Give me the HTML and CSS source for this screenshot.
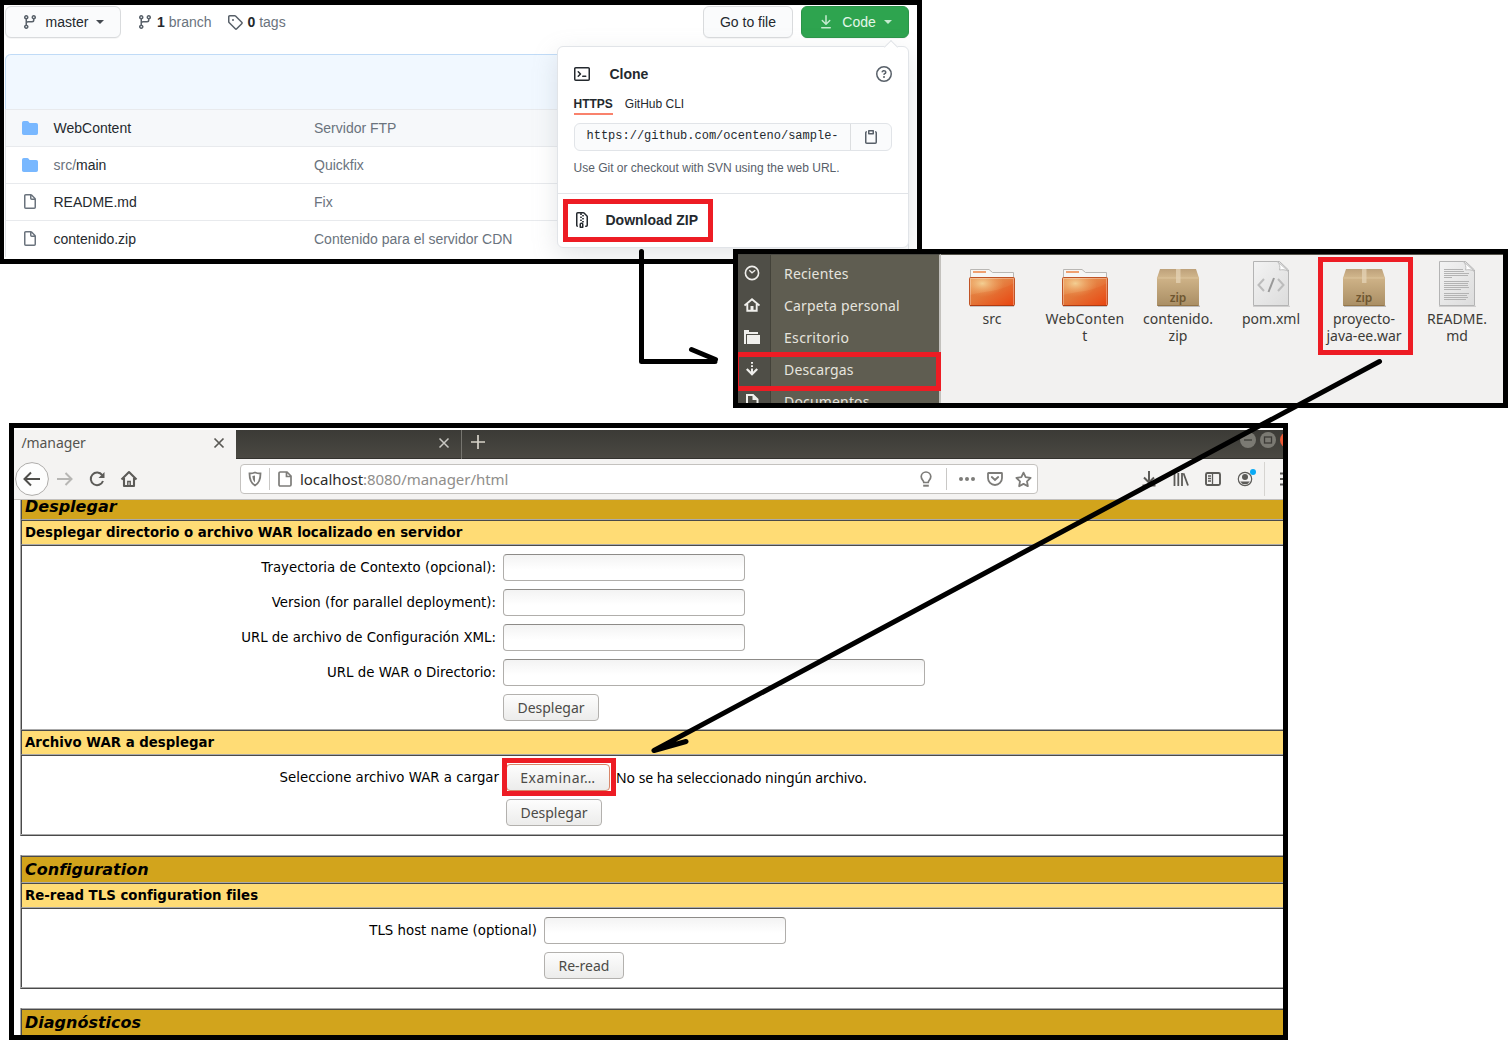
FILE: index.html
```html
<!DOCTYPE html>
<html lang="es">
<head>
<meta charset="utf-8">
<title>Despliegue del proyecto</title>
<link rel="stylesheet" href="styles.css">
</head>
<body>
<svg class="defs" width="0" height="0" aria-hidden="true">
  <defs>
    <symbol id="branch" viewBox="0 0 16 16"><path fill-rule="evenodd" d="M11.75 2.5a.75.75 0 100 1.5.75.75 0 000-1.5zm-2.25.75a2.25 2.25 0 113 2.122V6A2.5 2.5 0 0110 8.5H6a1 1 0 00-1 1v1.128a2.251 2.251 0 11-1.5 0V5.372a2.25 2.25 0 111.5 0v1.836A2.492 2.492 0 016 7h4a1 1 0 001-1v-.628A2.25 2.25 0 019.5 3.25zM4.25 12a.75.75 0 100 1.5.75.75 0 000-1.5zM3.5 3.25a.75.75 0 111.5 0 .75.75 0 01-1.5 0z"/></symbol>
    <symbol id="dir" viewBox="0 0 16 16"><path d="M1.75 1A1.75 1.75 0 000 2.75v10.5C0 14.216.784 15 1.75 15h12.5A1.75 1.75 0 0016 13.25v-8.5A1.75 1.75 0 0014.25 3h-6.5a.25.25 0 01-.2-.1l-.9-1.2c-.33-.44-.85-.7-1.4-.7h-3.5z"/></symbol>
    <symbol id="file" viewBox="0 0 16 16"><path fill-rule="evenodd" d="M3.75 1.5a.25.25 0 00-.25.25v11.5c0 .138.112.25.25.25h8.5a.25.25 0 00.25-.25V6H9.75A1.75 1.75 0 018 4.25V1.5H3.75zm5.75.56v2.19c0 .138.112.25.25.25h2.19L9.5 2.06zM2 1.75C2 .784 2.784 0 3.75 0h5.086c.464 0 .909.184 1.237.513l3.414 3.414c.329.328.513.773.513 1.237v8.086A1.75 1.75 0 0112.25 15h-8.5A1.75 1.75 0 012 13.25V1.75z"/></symbol>
    <linearGradient id="orange" x1="0" y1="0" x2="1" y2="1"><stop offset="0" stop-color="#e99a58"/><stop offset=".45" stop-color="#e58243"/><stop offset="1" stop-color="#ec4310"/></linearGradient>
    <radialGradient id="glow" cx=".28" cy=".2" r=".5"><stop offset="0" stop-color="#f3cf93"/><stop offset="1" stop-color="#f0a060" stop-opacity="0"/></radialGradient>
    <linearGradient id="box" x1="0" y1="0" x2="0" y2="1"><stop offset="0" stop-color="#cfb388"/><stop offset="1" stop-color="#a98e64"/></linearGradient>
    <linearGradient id="lid" x1="0" y1="0" x2="0" y2="1"><stop offset="0" stop-color="#bda17a"/><stop offset="1" stop-color="#d2b78d"/></linearGradient>
    <linearGradient id="paper" x1="0" y1="0" x2="1" y2="1"><stop offset="0" stop-color="#f3f3f3"/><stop offset="1" stop-color="#dcdcdc"/></linearGradient>
    <symbol id="folder" viewBox="0 0 48 48">
      <path d="M2.500 19V9.500h18.500l3.500 3H45.500V19z" fill="#f6f6f5" stroke="#b9b7b4"/>
      <rect x="5" y="11" width="13" height="2" fill="#efa070"/>
      <path d="M2 46.500h44" stroke="#999" stroke-opacity=".5"/>
      <rect x="1.500" y="17.500" width="45" height="28" rx="1" fill="url(#orange)" stroke="#c05325"/>
      <rect x="2" y="18" width="44" height="27" fill="url(#glow)"/>
      <path d="M2 35C16 31 32 32 46 23V45H2z" fill="#e0500e" fill-opacity=".18"/>
      <path d="M2.500 45V18.500h43V45" fill="none" stroke="#fff" stroke-opacity=".3"/>
      <path d="M2 45.500h44" stroke="#b03a10"/>
    </symbol>
    <symbol id="package" viewBox="0 0 48 48">
      <path d="M4 46.300h42" stroke="#888" stroke-opacity=".5" stroke-width="1.500"/>
      <path d="M6 9H42l3 9H3z" fill="url(#lid)"/>
      <rect x="3" y="17.500" width="42" height="28.500" rx="1" fill="url(#box)"/>
      <path d="M3.500 18h41" stroke="#dcc49c"/>
      <path d="M3.500 45.500h41" stroke="#937549"/>
      <rect x="22" y="9" width="4.500" height="14" fill="#e4d3b5" fill-opacity=".75"/>
      <text x="24" y="42" text-anchor="middle" class="zip">zip</text>
    </symbol>
    <symbol id="sheet" viewBox="0 0 48 48">
      <path d="M6 46.300h37" stroke="#888" stroke-opacity=".4"/>
      <path d="M6.500 1.500h26L41.500 10V45.500h-35z" fill="url(#paper)" stroke="#b4b4b4"/>
      <path d="M30.500 1.500L41.500 11.500c-3-2-6-2-9-1.500 1-3 0-6-2-8.500z" fill="#fff" stroke="#bdbdbd"/>
    </symbol>
  </defs>
</svg>

<main class="canvas">

  <section class="frame repo">
    <div class="repo-bar">
      <button class="gh-btn branch-btn"><svg width="16" height="16"><use href="#branch"/></svg><span>master</span><i class="caret"></i></button>
      <span class="count branches"><svg width="16" height="16"><use href="#branch"/></svg><span><b>1</b> branch</span></span>
      <span class="count tags"><svg width="16" height="16" viewBox="0 0 16 16"><path fill-rule="evenodd" d="M2.500 7.775V2.750a.25.25 0 01.25-.25h5.025a.25.25 0 01.177.073l6.250 6.250a.25.25 0 010 .354l-5.025 5.025a.25.25 0 01-.354 0l-6.250-6.250a.25.25 0 01-.073-.177zm-1.500 0V2.750C1 1.784 1.784 1 2.750 1h5.025c.464 0 .91.184 1.238.513l6.250 6.250a1.750 1.750 0 010 2.474l-5.026 5.026a1.750 1.750 0 01-2.474 0l-6.250-6.250A1.750 1.750 0 011 7.775zM6 5a1 1 0 100 2 1 1 0 000-2z"/></svg><span><b>0</b> tags</span></span>
      <button class="gh-btn goto">Go to file</button>
      <button class="gh-btn code"><svg width="16" height="16" viewBox="0 0 16 16"><path d="M7.470 10.780a.75.75 0 001.060 0l3.750-3.750a.75.75 0 00-1.060-1.060L8.750 8.440V1.750a.75.75 0 00-1.500 0v6.690L4.780 5.970a.75.75 0 00-1.060 1.060l3.750 3.750zM3.750 13a.75.75 0 000 1.500h8.500a.75.75 0 000-1.500h-8.500z"/></svg><span>Code</span><i class="caret"></i></button>
    </div>
    <div class="files">
      <div class="latest"></div>
      <div class="file-row hover"><svg class="dir" width="16" height="16"><use href="#dir"/></svg><span class="name">WebContent</span><span class="msg">Servidor FTP</span></div>
      <div class="file-row"><svg class="dir" width="16" height="16"><use href="#dir"/></svg><span class="name"><em>src/</em>main</span><span class="msg">Quickfix</span></div>
      <div class="file-row"><svg width="16" height="16"><use href="#file"/></svg><span class="name">README.md</span><span class="msg">Fix</span></div>
      <div class="file-row"><svg width="16" height="16"><use href="#file"/></svg><span class="name">contenido.zip</span><span class="msg">Contenido para el servidor CDN</span></div>
    </div>
    <div class="popup">
      <div class="clone">
        <div class="clone-head"><svg width="16" height="16" viewBox="0 0 16 16"><path fill-rule="evenodd" d="M0 2.750C0 1.784.784 1 1.750 1h12.500c.966 0 1.750.784 1.750 1.750v10.500A1.750 1.750 0 0114.250 15H1.750A1.750 1.750 0 010 13.250V2.750zm1.750-.25a.25.25 0 00-.25.25v10.500c0 .138.112.25.25.25h12.500a.25.25 0 00.25-.25V2.750a.25.25 0 00-.25-.25H1.750zM7.250 8a.75.75 0 01-.22.53l-2.250 2.250a.75.75 0 11-1.060-1.060L5.440 8 3.720 6.280a.75.75 0 111.060-1.060l2.250 2.250c.141.14.22.331.22.53zm1.500 1.500a.75.75 0 000 1.500h3a.75.75 0 000-1.500h-3z"/></svg><strong>Clone</strong><svg class="help" width="16" height="16" viewBox="0 0 16 16"><path fill-rule="evenodd" d="M8 1.500a6.500 6.500 0 100 13 6.500 6.500 0 000-13zM0 8a8 8 0 1116 0A8 8 0 010 8zm9 3a1 1 0 11-2 0 1 1 0 012 0zM6.920 6.085c.081-.16.19-.299.34-.398.145-.097.371-.187.74-.187.28 0 .553.087.738.225A.613.613 0 019 6.250c0 .177-.04.264-.077.318a.956.956 0 01-.277.245c-.076.051-.158.1-.258.161l-.007.004a7.728 7.728 0 00-.313.195 2.416 2.416 0 00-.692.661.75.75 0 001.248.832.956.956 0 01.276-.245 6.300 6.300 0 01.26-.16l.006-.004c.093-.057.204-.123.313-.195.222-.149.487-.355.692-.662.214-.32.329-.702.329-1.150 0-.76-.36-1.348-.863-1.725A2.760 2.760 0 008 4c-.631 0-1.155.16-1.572.438-.413.276-.68.638-.849.977a.75.75 0 101.342.67z"/></svg></div>
        <div class="proto"><span class="on">HTTPS</span><span>GitHub CLI</span></div>
        <div class="url-group"><span class="clone-url">https://github.com/ocenteno/sample-</span><span class="copy"><svg width="16" height="16" viewBox="0 0 16 16"><path fill-rule="evenodd" d="M5.750 1a.75.75 0 00-.75.75v3c0 .414.336.75.75.75h4.500a.75.75 0 00.75-.75v-3a.75.75 0 00-.75-.75h-4.500zm.75 3V2.500h3V4h-3zm-2.874-.467a.75.75 0 00-.752-1.298A1.750 1.750 0 002 3.750v9.500c0 .966.784 1.750 1.750 1.750h8.500A1.750 1.750 0 0014 13.250v-9.500a1.750 1.750 0 00-.874-1.515.75.75 0 10-.752 1.298.25.25 0 01.126.217v9.500a.25.25 0 01-.25.25h-8.500a.25.25 0 01-.25-.25v-9.500a.25.25 0 01.126-.217z"/></svg></span></div>
        <p class="hint">Use Git or checkout with SVN using the web URL.</p>
      </div>
      <div class="download"><svg width="16" height="16" viewBox="0 0 16 16"><path fill-rule="evenodd" d="M3.500 1.750a.25.25 0 01.25-.25h3a.75.75 0 000 1.500h.5a.75.75 0 000-1.500h2.086a.25.25 0 01.177.073l2.914 2.914a.25.25 0 01.073.177v8.586a.25.25 0 01-.25.25h-.5a.75.75 0 000 1.500h.5A1.750 1.750 0 0014 13.250V4.664c0-.464-.184-.909-.513-1.237L10.573.513A1.750 1.750 0 009.336 0H3.750A1.750 1.750 0 002 1.750v11.500c0 .649.353 1.214.874 1.515a.75.75 0 10.752-1.298.25.25 0 01-.126-.217V1.750zM8.750 3a.75.75 0 000 1.500h.5a.75.75 0 000-1.500h-.5zM6 5.250a.75.75 0 01.75-.75h.5a.75.75 0 010 1.500h-.5A.75.75 0 016 5.250zm2 1.500A.75.75 0 018.750 6h.5a.75.75 0 010 1.500h-.5A.75.75 0 018 6.750zm-1.250.75a.75.75 0 000 1.500h.5a.75.75 0 000-1.500h-.5zM8 9.750A.75.75 0 018.750 9h.5a.75.75 0 010 1.500h-.5A.75.75 0 018 9.750zm-.75.75a1.750 1.750 0 00-1.750 1.750v3c0 .414.336.75.75.75h2.500a.75.75 0 00.75-.75v-3a1.750 1.750 0 00-1.750-1.750h-.5zM7 12.250a.25.25 0 01.25-.25h.5a.25.25 0 01.25.25v2.250H7v-2.250z"/></svg><strong>Download ZIP</strong></div>
    </div>
  </section>

  <section class="frame nautilus">
    <nav class="places">
      <div class="place"><span class="pic"><svg width="16" height="16" viewBox="0 0 16 16"><circle cx="8" cy="8" r="6.600" fill="none" stroke="#f0efec" stroke-width="1.600"/><path d="M5.300 5.300L8 7.800l3.200-2.600" fill="none" stroke="#f0efec" stroke-width="1.300"/></svg></span><span>Recientes</span></div>
      <div class="place"><span class="pic"><svg width="16" height="16" viewBox="0 0 16 16"><path d="M.5 8.500L8 2.200l7.500 6.300M3.300 7v6.700h9.400V7" fill="none" stroke="#f0efec" stroke-width="1.900"/><path d="M6.500 14V9h3v5z" fill="#f0efec"/></svg></span><span>Carpeta personal</span></div>
      <div class="place"><span class="pic"><svg width="16" height="16" viewBox="0 0 16 16"><path d="M0 1h5v2h9v2H2v10H0z" fill="#f0efec"/><path d="M3 6h13v9H3z" fill="#f0efec"/></svg></span><span class="tight">Escritorio</span></div>
      <div class="place"><span class="pic"><svg width="16" height="16" viewBox="0 0 16 16"><path d="M8 1v1.800M8 4.200V6M8 7.400V13" stroke="#f0efec" stroke-width="2"/><path d="M2.800 8L8 13.300 13.200 8" fill="none" stroke="#f0efec" stroke-width="2.200"/></svg></span><span>Descargas</span></div>
      <div class="place"><span class="pic"><svg width="16" height="16" viewBox="0 0 16 16"><path d="M3 15V2h6l4.500 4.500V15z" fill="none" stroke="#f0efec" stroke-width="2"/><path d="M8.500 2v5h5z" fill="#f0efec"/></svg></span><span>Documentos</span></div>
    </nav>
    <div class="icons">
      <div class="item"><svg width="48" height="48"><use href="#folder"/></svg><span>src</span></div>
      <div class="item"><svg width="48" height="48"><use href="#folder"/></svg><span class="spread">WebConten<br>t</span></div>
      <div class="item"><svg width="48" height="48"><use href="#package"/></svg><span>contenido.<br>zip</span></div>
      <div class="item"><svg width="48" height="48" viewBox="0 0 48 48"><use href="#sheet"/><path d="M17 19l-5.500 6 5.500 6M31 19l5.500 6-5.500 6" fill="none" stroke="#bcbcbc" stroke-width="2"/><path d="M27 18l-5.500 14" stroke="#999" stroke-width="2"/></svg><span>pom.xml</span></div>
      <div class="item"><svg width="48" height="48"><use href="#package"/></svg><span>proyecto-<br>java-ee.war</span></div>
      <div class="item"><svg width="48" height="48" viewBox="0 0 48 48"><use href="#sheet"/><path d="M11 9.500h19M11 11.500h20M11 13.500h25M11 15.500h24M11 17.500h8M11 21.500h25M11 23.500h24M11 25.500h24M11 27.500h25M11 29.500h17M11 33.500h25M11 35.500h23M11 37.500h24M11 39.500h22" stroke="#b3b3b3"/></svg><span>README.<br>md</span></div>
    </div>
  </section>

  <section class="frame firefox">
    <div class="tabs">
      <div class="tab active"><span>/manager</span><svg width="12" height="12" viewBox="0 0 12 12"><path d="M1.500 1.500l9 9M10.500 1.500l-9 9" stroke="#5a5955" stroke-width="1.700"/></svg></div>
      <div class="tab dark"><svg width="12" height="12" viewBox="0 0 12 12"><path d="M1.500 1.500l9 9M10.500 1.500l-9 9" stroke="#c9c8c3" stroke-width="1.500"/></svg></div>
      <svg class="plus" width="16" height="16" viewBox="0 0 16 16"><path d="M8 1v14M1 8h14" stroke="#d6d2c8" stroke-width="1.700"/></svg>
      <svg class="winbtns" width="44" height="20" viewBox="-4 0 44 20"><circle cx="5" cy="10" r="8" fill="#7b7a73"/><path d="M1 10h8" stroke="#3c3b37" stroke-width="1.300"/><circle cx="25" cy="10" r="8" fill="#7b7a73"/><rect x="21.500" y="7" width="7" height="6" fill="none" stroke="#3c3b37" stroke-width="1.300"/><circle cx="45" cy="10" r="8" fill="#ee5a35"/></svg>
    </div>
    <div class="toolbar">
      <span class="tb back"><svg width="34" height="34" viewBox="0 0 34 34"><circle cx="17" cy="17" r="16.400" fill="#fdfdfd" stroke="#aeacaa"/><path d="M25 17H10M16 10.500L9.500 17l6.500 6.500" fill="none" stroke="#4f4e4b" stroke-width="2"/></svg></span>
      <span class="tb"><svg width="18" height="18" viewBox="0 0 18 18"><path d="M1 9h14M9.500 3l6 6-6 6" fill="none" stroke="#b7b6b4" stroke-width="2"/></svg></span>
      <span class="tb"><svg width="18" height="18" viewBox="0 0 18 18"><path d="M14.200 5.200A6.300 6.300 0 1 0 15 11" fill="none" stroke="#5c5b58" stroke-width="2"/><path d="M16.500 2v6H10.500z" fill="#5c5b58"/></svg></span>
      <span class="tb"><svg width="18" height="18" viewBox="0 0 18 18"><path d="M1.500 9.500L9 2l7.500 7.500M4 8v8h10V8" fill="none" stroke="#5c5b58" stroke-width="2.100" stroke-linejoin="round"/><path d="M7.800 16v-4.500h2.400V16" fill="none" stroke="#5c5b58" stroke-width="1.400"/></svg></span>
      <div class="urlbar">
        <span class="ub"><svg width="16" height="16" viewBox="0 0 16 16"><path d="M8 1.500c2 .9 4 1 5.500 1C13.500 8 12.500 12 8 14.500 3.500 12 2.500 8 2.500 2.500 4 2.500 6 2.400 8 1.500z" fill="none" stroke="#7d7c79" stroke-width="1.800"/><path d="M8 4.500v7C6 9.800 5.500 7.500 5.400 5z" fill="#7d7c79"/></svg></span>
        <i class="vr"></i>
        <span class="ub doc"><svg width="16" height="16" viewBox="0 0 16 16"><path d="M2 2.200C2 1.500 2.500 1 3.200 1H10l4 4v8.800c0 .7-.5 1.200-1.200 1.200H3.200C2.500 15 2 14.500 2 13.800zM9.500 1v4.500H14" fill="none" stroke="#7d7c79" stroke-width="1.700"/></svg></span>
        <span class="address">localhost<em>:8080/manager/html</em></span>
        <span class="ub bulb"><svg width="16" height="18" viewBox="0 0 16 18"><path d="M5.800 12.500c0-2-2.600-2.700-2.600-6A4.800 4.800 0 0 1 8 2a4.800 4.800 0 0 1 4.800 4.500c0 3.300-2.600 4-2.600 6z" fill="none" stroke="#7d7c79" stroke-width="1.700"/><path d="M5.200 15.700h5.600" stroke="#7d7c79" stroke-width="2"/></svg></span>
        <i class="vr gap"></i>
        <span class="ub"><svg width="16" height="16" viewBox="0 0 16 16"><g fill="#7d7c79"><circle cx="2" cy="8" r="2"/><circle cx="8" cy="8" r="2"/><circle cx="14" cy="8" r="2"/></g></svg></span>
        <span class="ub"><svg width="16" height="16" viewBox="0 0 16 16"><path d="M1.500 2h13c.3 0 .5.200.5.500V7A7 7 0 0 1 1 7V2.500c0-.3.200-.5.500-.5z" fill="none" stroke="#7d7c79" stroke-width="1.800"/><path d="M4.800 6L8 9l3.200-3" fill="none" stroke="#7d7c79" stroke-width="1.800" stroke-linecap="round"/></svg></span>
        <span class="ub"><svg width="17" height="17" viewBox="0 0 16 16"><path d="M8 1.500l2 4.300 4.700.6-3.400 3.300.8 4.600L8 12.100l-4.100 2.200.8-4.600L1.300 6.400 6 5.800z" fill="none" stroke="#7d7c79" stroke-width="1.700" stroke-linejoin="round"/></svg></span>
      </div>
      <div class="tools">
        <span class="tb"><svg width="16" height="16" viewBox="0 0 16 16"><path d="M8 0v11M3 6.500l5 5 5-5M1.500 14.500h13" fill="none" stroke="#5c5b58" stroke-width="2"/></svg></span>
        <span class="tb"><svg width="16" height="16" viewBox="0 0 16 16"><path d="M1.500 2v13M5.300 2v13M9 2v13M10.500 2.300L15 14.500" fill="none" stroke="#5c5b58" stroke-width="1.800"/></svg></span>
        <span class="tb"><svg width="16" height="16" viewBox="0 0 16 16"><rect x="1" y="2" width="14" height="12" rx="1.500" fill="none" stroke="#5c5b58" stroke-width="1.900"/><path d="M7.500 2v12M3 5h3M3 7.500h3M3 10h3" stroke="#5c5b58" stroke-width="1.300"/></svg></span>
        <span class="tb acct"><svg width="24" height="24" viewBox="0 0 24 24"><circle cx="12" cy="12" r="6.700" fill="none" stroke="#5c5b58" stroke-width="1.200"/><circle cx="12" cy="10" r="3" fill="#5c5b58"/><path d="M7.200 14.500h9.600A5.500 5.500 0 0 1 7.200 14.500z" fill="#5c5b58"/><circle cx="20" cy="5" r="3" fill="#0aaaf5"/></svg></span>
        <i class="vr tall"></i>
        <svg class="menu" width="4" height="16" viewBox="0 0 4 16"><path d="M0 2.500h4M0 8h4M0 13.500h4" stroke="#5c5b58" stroke-width="1.900"/></svg>
      </div>
    </div>
    <div class="page">
      <div class="tbl">
        <div class="row title cut">Desplegar</div>
        <div class="row sub">Desplegar directorio o archivo WAR localizado en servidor</div>
        <div class="row form deploy">
          <label>Trayectoria de Contexto (opcional):</label><input type="text" class="inp">
          <label>Version (for parallel deployment):</label><input type="text" class="inp">
          <label>URL de archivo de Configuración XML:</label><input type="text" class="inp">
          <label>URL de WAR o Directorio:</label><input type="text" class="inp wide">
          <button class="btn">Desplegar</button>
        </div>
        <div class="row sub">Archivo WAR a desplegar</div>
        <div class="row form upload">
          <label>Seleccione archivo WAR a cargar</label><div class="picker"><button class="btn browse">Examinar…</button><span class="none">No se ha seleccionado ningún archivo.</span></div>
          <button class="btn">Desplegar</button>
        </div>
      </div>
      <div class="tbl">
        <div class="row title">Configuration</div>
        <div class="row sub">Re-read TLS configuration files</div>
        <div class="row form tls">
          <label>TLS host name (optional)</label><input type="text" class="inp">
          <button class="btn reread">Re-read</button>
        </div>
      </div>
      <div class="tbl">
        <div class="row title">Diagnósticos</div>
      </div>
    </div>
  </section>

  <div class="mark m-zip"></div>
  <div class="mark m-descargas"></div>
  <div class="mark m-war"></div>
  <div class="mark m-examinar"></div>
  <svg class="arrows" width="1510" height="1042" viewBox="0 0 1510 1042">
    <path d="M641.500 251.500V361.500H715M715.500 359.500L691.500 349.500"/>
    <path d="M1379.500 361.500L654 750.500L686 741.500"/>
  </svg>
</main>
</body>
</html>
```
FILE: styles.css
```css
* { box-sizing: border-box; }
body { margin: 0; background: #fff; }
em, i { font-style: normal; }
svg { flex: none; display: block; }
button { margin: 0; padding: 0; cursor: pointer; }
.defs { position: absolute; }

.canvas { position: relative; width: 1510px; height: 1042px; overflow: hidden; }
.frame { position: absolute; border: 5px solid #000; background: #fff; overflow: hidden; }

/* repository window */
.repo { left: 0; top: 0; width: 922px; height: 264px; border-left-width: 4px; padding: 1px 8px 0 1px; font: 14px/20px "Liberation Sans", Arial, sans-serif; color: #24292e; }
.repo svg { fill: currentColor; }
.repo-bar { display: flex; align-items: center; height: 32px; }
.gh-btn { display: flex; align-items: center; justify-content: center; height: 32px; border: 1px solid #d9dbdd; border-radius: 6px; background: #fafbfc; box-shadow: 0 1px 0 rgba(27,31,35,.04); font: inherit; color: #24292e; }
.caret { width: 0; height: 0; border: 4px solid transparent; border-top-color: currentColor; border-bottom: 0; }
.branch-btn { width: 116px; gap: 8px; }
.branch-btn svg { color: #586069; }
.branch-btn .caret { color: #444a50; }
.count { display: flex; align-items: center; gap: 4px; color: #6a737d; }
.count b { color: #24292e; }
.count svg { color: #586069; }
.branches { margin-left: 16px; }
.tags { margin-left: 15px; gap: 5px; }
.goto { width: 90px; margin-left: auto; }
.code { width: 108px; margin-left: 8px; gap: 8px; background: #2ea44f; border-color: #2b9449; color: #e4f7e9; }
.code svg, .code .caret { color: #c5ebd0; }
.files { margin-top: 16px; border-left: 1px solid #e1e4e8; border-right: 1px solid #e1e4e8; border-radius: 6px 6px 0 0; }
.latest { height: 55px; margin: 0 -1px; background: #f1f8ff; border: 1px solid #c0dbf7; border-bottom: 0; border-radius: 6px 6px 0 0; }
.file-row { display: flex; align-items: center; height: 37px; padding-left: 16px; border-top: 1px solid #e8eaed; }
.file-row.hover { background: #f6f8fa; }
.file-row svg { color: #6a737d; }
.file-row svg.dir { color: #79b8ff; }
.name { margin-left: 15.5px; width: 260.5px; }
.name em, .msg { color: #6a737d; }
.popup { position: absolute; left: 553px; top: 41px; width: 352px; height: 202px; background: #fff; border: 1px solid #e1e4e8; border-radius: 6px; box-shadow: 0 8px 24px rgba(149,157,165,.25); }
.popup::before { content: ""; position: absolute; right: 12px; top: -5px; width: 9px; height: 9px; background: #fff; border: 1px solid #e1e4e8; border-right: 0; border-bottom: 0; transform: rotate(45deg); }
.clone { height: 147px; padding: 18px 16px 0 15.5px; border-bottom: 1px solid #e1e4e8; }
.clone-head { display: flex; align-items: center; height: 18px; }
.clone-head strong { margin-left: 20px; }
.help { margin-left: auto; color: #586069; }
.proto { display: flex; gap: 12px; margin-top: 11px; height: 20px; font-size: 12px; line-height: 20px; }
.proto .on { font-weight: 700; border-bottom: 2px solid #f9826c; height: 21px; }
.url-group { display: flex; height: 28px; margin-top: 9px; border: 1px solid #e1e4e8; border-radius: 6px; background: #fafbfc; }
.clone-url { width: 275.5px; padding-left: 12px; font: 12px/25px "Liberation Mono", monospace; }
.copy { flex: 1; display: flex; align-items: center; justify-content: center; border-left: 1px solid #dcdee0; color: #586069; }
.hint { margin: 8px 0 0; font-size: 12px; line-height: 18px; color: #586069; }
.download { display: flex; align-items: center; height: 51px; padding-left: 16px; }
.download strong { margin-left: 15.5px; }

/* file manager window */
.nautilus { left: 733px; top: 249px; width: 775px; height: 159px; display: flex; background: #f2f1f0; font: 14px/17px "Noto Sans", sans-serif; color: #3c3b37; }
.places { width: 204px; height: 149px; padding-top: 2px; border-top: 1px solid #4a4943; border-right: 2px solid #c3c1bd; background: linear-gradient(90deg, #4f4e47 32px, #434239 32px, #434239 33px, #5f5d51 33px); color: #e6e4de; letter-spacing: .17px; overflow: hidden; }
.place { display: flex; align-items: center; height: 32px; }
.place .tight { letter-spacing: .33px; }
.pic { width: 28px; margin-right: 18px; display: flex; justify-content: center; }
.icons { flex: 1; display: flex; padding: 5px 0 0 4px; border-top: 1px solid #55534b; }
.item { width: 93px; display: flex; flex-direction: column; align-items: center; text-align: center; }
.item span { margin: 2px 0 0 1px; }
.item .spread { letter-spacing: .25px; }
.zip { font: 600 12px "Noto Sans", sans-serif; fill: #6e5630; }

/* browser window */
.firefox { left: 9px; top: 423px; width: 1279px; height: 617px; padding-top: 2px; }
.tabs { display: flex; align-items: center; height: 29px; background: linear-gradient(#3b3a36, #4a4842); border-bottom: 1px solid #33322e; font: 14px/18px "Noto Sans", sans-serif; }
.tab { display: flex; align-items: center; height: 29px; }
.tab.active { width: 222px; padding: 0 11px 3px 7.5px; justify-content: space-between; background: #f4f3f2; color: #54534f; letter-spacing: -.1px; margin-bottom: -1px; }
.tab.dark { width: 226px; padding: 0 11px 2px 0; justify-content: flex-end; border-right: 1px solid #76756f; }
.plus { margin: 0 0 4px 8px; }
.winbtns { margin: -8px 0 0 auto; }
.toolbar { display: flex; align-items: center; height: 41px; padding-left: 2px; background: #f4f3f2; border-bottom: 1px solid #c2c0bd; }
.tb { width: 32px; display: flex; justify-content: center; flex: none; }
.tb.back { margin-right: 1px; overflow: visible; }
.tb.back svg { margin: 0 -1px; }
.urlbar { display: flex; align-items: center; width: 798px; height: 30px; margin-left: 95px; border: 1px solid #c4c2bf; border-radius: 4px; background: #fff; }
.ub { width: 28px; display: flex; justify-content: center; }
.ub.doc { width: 29px; }
.vr { flex: none; width: 1px; height: 22px; background: #c9c8c6; }
.vr.gap { margin: 0 6px; }
.vr.tall { height: 34px; margin-left: 3px; background: #d6d4d1; }
.address { flex: 1; margin-left: 1px; font: 15px/20px "Noto Sans", sans-serif; letter-spacing: -.04px; color: #2c2b29; }
.address em { color: #8f8e8b; }
.tools { display: flex; align-items: center; margin-left: 95px; width: 150px; }
.menu { margin-left: 15px; }
.page { padding-left: 6px; font: 13.33px/16px "DejaVu Sans", sans-serif; color: #000; }
.tbl { margin-bottom: 19px; border-left: 1px solid #aaa; border-bottom: 1px solid #4a4a4a; }
.row { border-top: 1px solid #aaa; border-left: 1px solid #4a4a4a; box-shadow: inset 0 1px #4a4a4a; }
.tbl::after { content: ""; display: block; height: 1px; background: #aaa; }
.title { height: 27px; padding-left: 3px; background: #d2a41c; font: italic 700 16px/27px "DejaVu Sans", sans-serif; }
.title.cut { height: 19px; border-top: 0; box-shadow: none; line-height: 13px; }
.sub { height: 25px; padding-left: 3px; background: #ffdc75; font-weight: 700; line-height: 25px; }
.form { display: grid; grid-auto-rows: 27px; row-gap: 8px; justify-content: start; align-items: center; padding-top: 9px; }
.form label { grid-column: 1; text-align: right; padding-top: 1px; white-space: nowrap; }
.form > :not(label) { grid-column: 2; }
.deploy { height: 185px; grid-template-columns: 474px auto; column-gap: 7px; }
.upload { height: 80px; grid-template-columns: 477px auto; column-gap: 7px; }
.tls { height: 80px; grid-template-columns: 515px auto; column-gap: 7px; }
.inp { width: 242px; height: 27px; padding: 0; border: 1px solid #b0aeab; border-top-color: #8d8b88; border-radius: 4px; background: linear-gradient(#f3f3f3, #fff 60%); }
.inp.wide { width: 422px; }
.btn { width: 96px; height: 27px; border: 1px solid #b3b1ae; border-radius: 4px; background: linear-gradient(#fdfdfd, #ececeb); font: 14px/18px "Noto Sans", sans-serif; color: #4c4b47; }
.btn.reread { width: 80px; }
.picker { display: flex; align-items: center; }
.btn.browse { width: 104px; border-color: #d8876a; letter-spacing: .5px; }
.none { margin-left: 6px; font: 14px/18px "Noto Sans", sans-serif; letter-spacing: -.04px; }

/* annotations over the windows */
.mark { position: absolute; border: 5px solid #ed1c24; }
.m-zip { left: 563px; top: 199px; width: 150px; height: 43px; }
.m-descargas { left: 738px; top: 352px; width: 203px; height: 39px; border-left-width: 1px; }
.m-war { left: 1318px; top: 257px; width: 95px; height: 98px; }
.m-examinar { left: 502px; top: 758px; width: 114px; height: 38px; }
.arrows { position: absolute; left: 0; top: 0; fill: none; stroke: #000; stroke-width: 5; stroke-linecap: round; stroke-linejoin: round; pointer-events: none; }
```
